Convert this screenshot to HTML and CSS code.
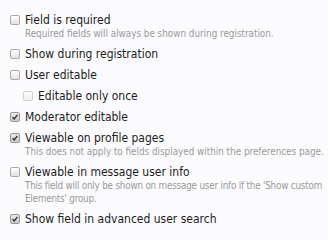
FILE: index.html
```html
<!DOCTYPE html>
<html>
<head>
<meta charset="utf-8">
<link rel="stylesheet" href="styles.css">
</head>
<body>
<ul class="options">
  <li class="option">
    <div class="row"><span class="box"></span><span class="label">Field is required</span></div>
    <div class="hint">Required fields will always be shown during registration.</div>
  </li>
  <li class="option">
    <div class="row"><span class="box"></span><span class="label">Show during registration</span></div>
  </li>
  <li class="option">
    <div class="row"><span class="box"></span><span class="label">User editable</span></div>
  </li>
  <li class="option sub">
    <div class="row"><span class="box disabled"></span><span class="label">Editable only once</span></div>
  </li>
  <li class="option">
    <div class="row"><span class="box checked"><svg viewBox="0 0 10 10"><path d="M2 5.2 L4 7.4 L8 2.4" /></svg></span><span class="label">Moderator editable</span></div>
  </li>
  <li class="option">
    <div class="row"><span class="box checked"><svg viewBox="0 0 10 10"><path d="M2 5.2 L4 7.4 L8 2.4" /></svg></span><span class="label">Viewable on profile pages</span></div>
    <div class="hint">This does not apply to fields displayed within the preferences page.</div>
  </li>
  <li class="option">
    <div class="row"><span class="box"></span><span class="label">Viewable in message user info</span></div>
    <div class="hint tight">This field will only be shown on message user info if the 'Show custom Elements' group.</div>
  </li>
  <li class="option">
    <div class="row"><span class="box checked"><svg viewBox="0 0 10 10"><path d="M2 5.2 L4 7.4 L8 2.4" /></svg></span><span class="label">Show field in advanced user search</span></div>
  </li>
</ul>
</body>
</html>
```

FILE: styles.css
```css
html, body {
  margin: 0;
  padding: 0;
  background: #fbfbfe;
}
body {
  font-family: "DejaVu Sans Condensed", "DejaVu Sans", sans-serif;
  font-stretch: condensed;
  color: #1c1c1c;
}
.options {
  list-style: none;
  margin: 0;
  padding: 13px 0 0 10px;
  display: flex;
  flex-direction: column;
  gap: 7px;
}
.option.sub {
  padding-left: 13px;
}
.row {
  display: flex;
  align-items: center;
  gap: 5px;
  height: 14px;
  font-size: 12px;
  line-height: 14px;
}
.box {
  box-sizing: border-box;
  width: 10px;
  height: 10px;
  border: 1px solid #a9a9a9;
  border-radius: 2px;
  background: linear-gradient(#ffffff, #e2e2e2);
  display: flex;
  flex: none;
}
.box.disabled {
  border-color: #d2d2d2;
  background: linear-gradient(#fdfdfd, #efefef);
}
.box.checked {
  background: linear-gradient(#e9e9e9, #c9c9c9);
  border-color: #999;
}
.box svg {
  width: 8px;
  height: 8px;
}
.box svg path {
  fill: none;
  stroke: #333;
  stroke-width: 1.8;
}
.hint {
  margin-left: 15px;
  font-size: 9.8px;
  line-height: 13px;
  color: #999999;
}
.hint.tight {
  letter-spacing: -0.2px;
}
```
